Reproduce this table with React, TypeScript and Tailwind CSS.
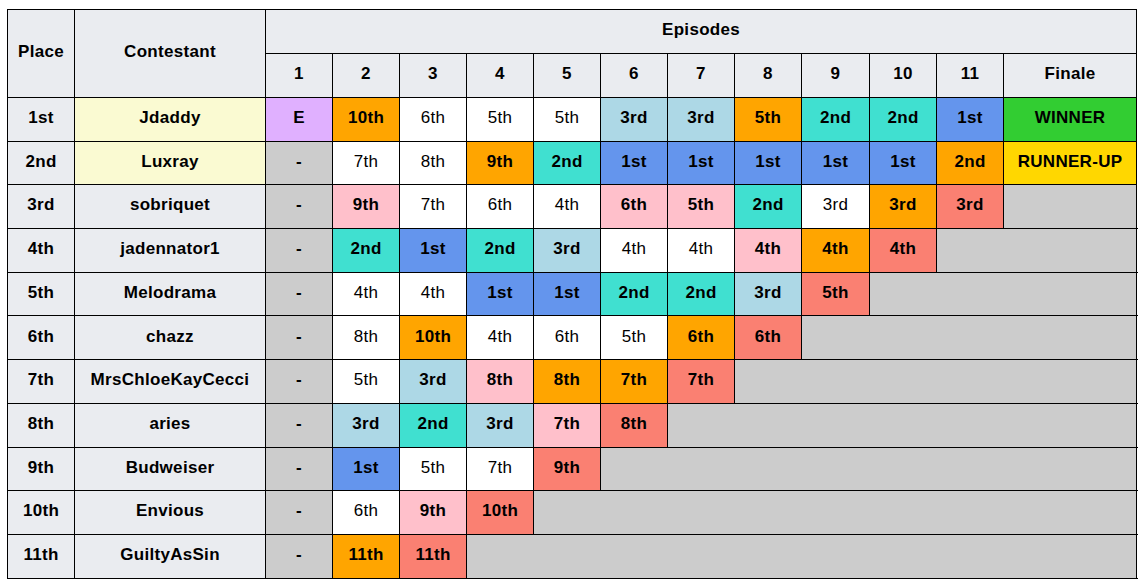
import React from "react";

type Cell = { t: string; c: string; b?: boolean };

const C: Record<string, string> = {
  w: "bg-white",
  o: "bg-[#ffa500]",
  p: "bg-[#ffc0cb]",
  t: "bg-[#40e0d0]",
  l: "bg-[#add8e6]",
  b: "bg-[#6495ed]",
  s: "bg-[#fa8072]",
  m: "bg-[#e0b0ff]",
  g: "bg-[#cccccc]",
};

// "7th:w" -> white cell, normal weight; others bold
const parse = (list: string) =>
  list.split(" ").map((x) => {
    const [t, c] = x.split(":");
    return { t, c, b: c !== "w" } as Cell;
  });

const rows: { place: string; name: string; top?: boolean; eps: Cell[]; finale?: Cell; gray: number }[] = [
  { place: "1st", name: "Jdaddy", top: true, eps: parse("E:m 10th:o 6th:w 5th:w 5th:w 3rd:l 3rd:l 5th:o 2nd:t 2nd:t 1st:b"), finale: { t: "WINNER", c: "bg-[#32cd32]", b: true }, gray: 0 },
  { place: "2nd", name: "Luxray", top: true, eps: parse("-:g 7th:w 8th:w 9th:o 2nd:t 1st:b 1st:b 1st:b 1st:b 1st:b 2nd:o"), finale: { t: "RUNNER-UP", c: "bg-[#ffd700]", b: true }, gray: 0 },
  { place: "3rd", name: "sobriquet", eps: parse("-:g 9th:p 7th:w 6th:w 4th:w 6th:p 5th:p 2nd:t 3rd:w 3rd:o 3rd:s"), gray: 1 },
  { place: "4th", name: "jadennator1", eps: parse("-:g 2nd:t 1st:b 2nd:t 3rd:l 4th:w 4th:w 4th:p 4th:o 4th:s"), gray: 2 },
  { place: "5th", name: "Melodrama", eps: parse("-:g 4th:w 4th:w 1st:b 1st:b 2nd:t 2nd:t 3rd:l 5th:s"), gray: 3 },
  { place: "6th", name: "chazz", eps: parse("-:g 8th:w 10th:o 4th:w 6th:w 5th:w 6th:o 6th:s"), gray: 4 },
  { place: "7th", name: "MrsChloeKayCecci", eps: parse("-:g 5th:w 3rd:l 8th:p 8th:o 7th:o 7th:s"), gray: 5 },
  { place: "8th", name: "aries", eps: parse("-:g 3rd:l 2nd:t 3rd:l 7th:p 8th:s"), gray: 6 },
  { place: "9th", name: "Budweiser", eps: parse("-:g 1st:b 5th:w 7th:w 9th:s"), gray: 7 },
  { place: "10th", name: "Envious", eps: parse("-:g 6th:w 9th:p 10th:s"), gray: 8 },
  { place: "11th", name: "GuiltyAsSin", eps: parse("-:g 11th:o 11th:s"), gray: 9 },
];

const bd = "border border-black pb-[3px]";
const head = `${bd} bg-[#eaecf0] font-bold`;

export default function App() {
  return (
    <div className="min-h-screen bg-white pl-[7px] pt-[9px] font-['Liberation_Sans',Arial,sans-serif] text-[17px] tracking-[0.3px] text-black">
      <table className="table-fixed border-collapse text-center w-[1130px]">
        <colgroup>
          <col className="w-[67px]" />
          <col className="w-[191px]" />
          {[67, 67, 67, 67, 67, 67, 67, 67, 68, 67, 67].map((w, i) => (
            <col key={i} style={{ width: w }} />
          ))}
          <col className="w-[133px]" />
        </colgroup>
        <thead>
          <tr className="h-[44px]">
            <th rowSpan={2} className={head}>Place</th>
            <th rowSpan={2} className={head}>Contestant</th>
            <th colSpan={12} className={head}>Episodes</th>
          </tr>
          <tr className="h-[44px]">
            {["1", "2", "3", "4", "5", "6", "7", "8", "9", "10", "11", "Finale"].map((h) => (
              <th key={h} className={head}>{h}</th>
            ))}
          </tr>
        </thead>
        <tbody>
          {rows.map((r) => (
            <tr key={r.place} className="h-[43.7px]">
              <td className={head}>{r.place}</td>
              <td className={`${bd} font-bold ${r.top ? "bg-[#fafad2]" : "bg-[#eaecf0]"}`}>{r.name}</td>
              {r.eps.map((e, i) => (
                <td key={i} className={`${bd} ${C[e.c]} ${e.b ? "font-bold" : ""}`}>{e.t}</td>
              ))}
              {r.finale ? (
                <td className={`${bd} ${r.finale.c} font-bold`}>{r.finale.t}</td>
              ) : (
                <td colSpan={r.gray + 1} className={`${bd} bg-[#cccccc]`} />
              )}
            </tr>
          ))}
        </tbody>
      </table>
    </div>
  );
}
